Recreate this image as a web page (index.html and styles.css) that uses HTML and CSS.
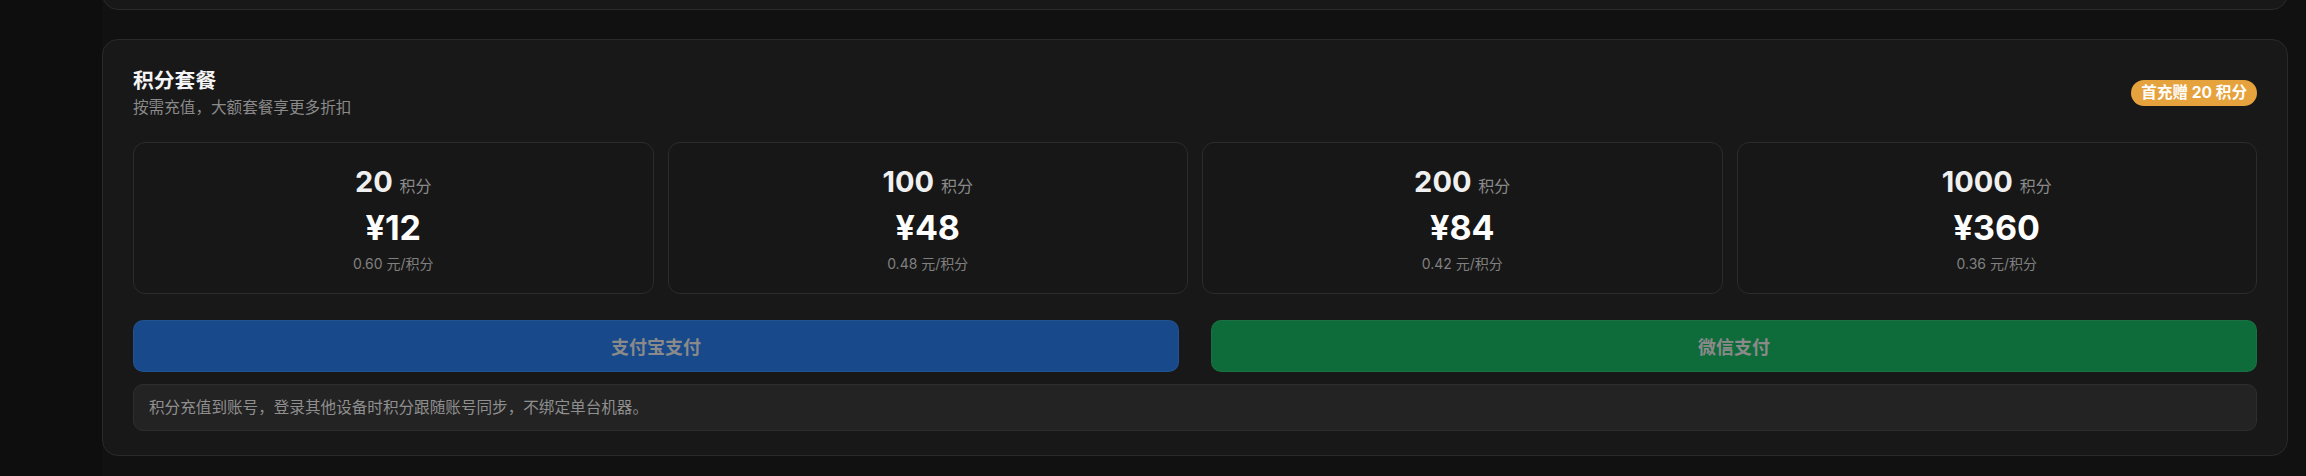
FILE: index.html
```html
<!DOCTYPE html>
<html lang="zh-Hans">
<head>
	<meta charset="UTF-8">
	<title>积分套餐</title>
	<link rel="stylesheet" href="styles.css">
</head>
<body>
	<div class="page">
		<div class="side"></div>
		<div class="main">
			<div class="card prev"></div>

			<div class="card plans">
				<div class="head">
					<div>
						<div class="title">积分套餐</div>
						<div class="sub">按需充值，大额套餐享更多折扣</div>
					</div>
					<span class="badge">首充赠 20 积分</span>
				</div>

				<div class="list">
					<div class="item">
						<div class="qty">20 <span class="unit">积分</span></div>
						<div class="price">¥12</div>
						<div class="per">0.60 元/积分</div>
					</div>
					<div class="item">
						<div class="qty">100 <span class="unit">积分</span></div>
						<div class="price">¥48</div>
						<div class="per">0.48 元/积分</div>
					</div>
					<div class="item">
						<div class="qty">200 <span class="unit">积分</span></div>
						<div class="price">¥84</div>
						<div class="per">0.42 元/积分</div>
					</div>
					<div class="item">
						<div class="qty">1000 <span class="unit">积分</span></div>
						<div class="price">¥360</div>
						<div class="per">0.36 元/积分</div>
					</div>
				</div>

				<div class="pay">
					<button type="button" class="btn alipay">支付宝支付</button>
					<button type="button" class="btn wechat">微信支付</button>
				</div>

				<div class="note">积分充值到账号，登录其他设备时积分跟随账号同步，不绑定单台机器。</div>
			</div>
		</div>
	</div>
</body>
</html>
```

FILE: styles.css
```css
*{box-sizing: border-box;}
html,body{margin: 0;height: 100%;overflow: hidden;}
body{background: #111;font-family: "Inter", "Noto Sans CJK SC", sans-serif;color: #f2f2f2;}

.page{display: flex;height: 100%;}
.side{width: 102px;flex-shrink: 0;background: #0e0e0e;}
.main{flex: 1;padding-right: 18px;background: #111;}

.card{background: #181818;border: 1px solid #2a2a2a;border-radius: 16px;}
.prev{height: 32px;margin-top: -22px;}
.plans{margin-top: 29px;padding: 26px 30px 24px;}

.head{display: flex;justify-content: space-between;align-items: center;}
.title{font-size: 20.8px;line-height: 29px;font-weight: 700;color: #f5f5f5;}
.sub{margin-top: 2px;font-size: 15.6px;line-height: 22px;color: #8a8a8a;}
.badge{display: inline-block;padding: 4px 10px;border-radius: 13px;background: #e6a23c;color: #fff;font-size: 15.6px;line-height: 18px;font-weight: 700;}

.list{display: grid;grid-template-columns: repeat(4, 1fr);gap: 14px;margin-top: 23px;}
.item{border: 1px solid #2c2c2c;border-radius: 12px;background: #171717;padding: 22px 10px 20px;text-align: center;}
.qty{height: 34px;font-size: 29px;line-height: 34px;font-weight: 700;color: #f0f0f0;}
.qty .unit{font-size: 16px;line-height: 1;font-weight: 400;color: #8a8a8a;}
.price{margin-top: 7px;font-size: 34px;line-height: 43px;font-weight: 700;color: #fff;}
.per{margin-top: 5px;font-size: 14px;line-height: 19px;color: #808080;}

.pay{display: grid;grid-template-columns: 1fr 1fr;gap: 32px;margin-top: 26px;}
.btn{height: 52px;border: 1px solid rgba(255,255,255,0.05);border-radius: 10px;font-family: inherit;font-size: 18px;font-weight: 700;color: #8a8a8a;cursor: pointer;}
.alipay{background: #17498b;}
.wechat{background: #0e6b3a;}

.note{margin-top: 12px;padding: 11px 15px;border: 1px solid #2e2e2e;border-radius: 10px;background: #232323;font-size: 15.6px;line-height: 23px;color: #8f8f8f;}
```
